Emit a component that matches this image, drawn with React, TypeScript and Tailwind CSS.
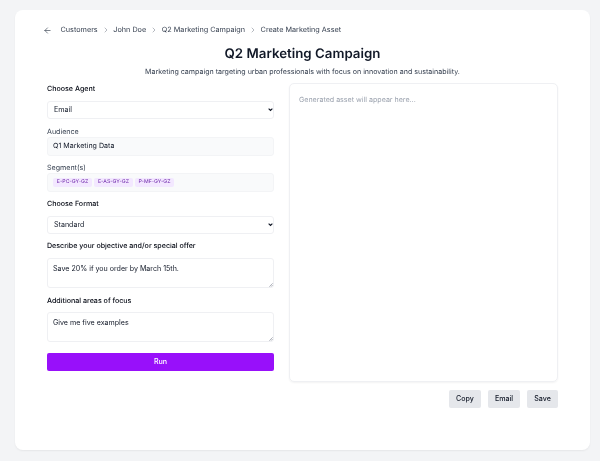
import { ArrowLeft, ChevronRight } from "lucide-react";

const font = { fontFamily: "Inter, sans-serif" };

function Crumb({ label, last }: { label: string; last?: boolean }) {
  return (
    <>
      <span className="text-[7.25px] leading-[12px] text-[#374151]">{label}</span>
      {!last && <ChevronRight className="w-[8px] h-[8px] mx-[3.8px] text-[#6b7280]" strokeWidth={1.5} />}
    </>
  );
}

function Heading({ children }: { children: string }) {
  return <div className="text-[7.1px] leading-[12px] font-medium text-[#030712]">{children}</div>;
}

function Select({ value }: { value: string }) {
  return (
    <div className="relative mt-[6px] h-[18px] w-full">
      <select
        defaultValue={value}
        className="block w-full h-full pl-[6px] pr-[12px] appearance-none text-[7.1px] leading-[12px] text-[#111827] bg-white border border-[#eff0f3] rounded-[3px] outline-none"
        style={font}
      >
        <option>{value}</option>
      </select>
      <svg viewBox="0 0 8 8" className="absolute right-[1.5px] top-[6px] w-[5px] h-[5px] pointer-events-none">
        <path d="M1 2.5 L4 5.5 L7 2.5" fill="none" stroke="#111827" strokeWidth="1.8" />
      </svg>
    </div>
  );
}

function Area({ value, mt }: { value: string; mt: string }) {
  return (
    <div className={`relative h-[30px] ${mt}`}>
      <textarea
        defaultValue={value}
        className="block w-full h-full resize-none px-[5px] py-[4px] text-[7.1px] leading-[12px] text-[#111827] bg-white border border-[#eff0f3] rounded-[3px] outline-none"
        style={font}
      />
      <svg viewBox="0 0 6 6" className="absolute right-[1px] bottom-[1px] w-[4px] h-[4px] pointer-events-none">
        <path d="M0.5 5.5 L5.5 0.5 M3 5.5 L5.5 3" fill="none" stroke="#6b7280" strokeWidth="0.8" />
      </svg>
    </div>
  );
}

function Chip({ children }: { children: string }) {
  return (
    <span className="w-[39px] h-[9px] flex items-center justify-center rounded-[2px] bg-[#f3e8ff] text-[5.2px] text-[#6b21a8]">
      {children}
    </span>
  );
}

function ActionButton({ children, width }: { children: string; width: string }) {
  return (
    <button className={`${width} h-[18px] flex items-center justify-center rounded-[2px] bg-[#e5e7eb] text-[7.1px] font-medium text-[#111827]`}>
      {children}
    </button>
  );
}

export default function App() {
  return (
    <div className="w-[600px] h-[461px] bg-[#f3f4f6] pt-[10px] pl-[15px] pr-[10px] overflow-hidden [text-rendering:geometricPrecision]" style={font}>
      <div className="w-[575px] h-[440px] bg-white rounded-[8px] px-[32px] pt-[14px] shadow-[0_1px_2px_rgba(0,0,0,0.06)] [will-change:transform]">
        <div className="flex items-center h-[12px]">
          <ArrowLeft className="w-[9px] h-[9px] mr-[8.5px] ml-[-4px] text-[#374151]" strokeWidth={1.75} />
          <Crumb label="Customers" />
          <Crumb label="John Doe" />
          <Crumb label="Q2 Marketing Campaign" />
          <Crumb label="Create Marketing Asset" last />
        </div>
        <h1 className="mt-[8px] text-center text-[13.3px] leading-[20px] font-semibold text-[#111827]">
          Q2 Marketing Campaign
        </h1>
        <p className="mt-[2px] text-center text-[7.1px] leading-[12px] text-[#374151]">
          Marketing campaign targeting urban professionals with focus on innovation and sustainability.
        </p>
        <div className="flex gap-[15px] mt-[5px]">
          <div className="w-[227px] shrink-0">
            <Heading>Choose Agent</Heading>
            <Select value="Email" />
            <div className="mt-[8px] text-[7.1px] leading-[10px] text-[#374151]">Audience</div>
            <div className="h-[19px] px-[5px] flex items-center rounded-[3px] bg-[#f9fafb] border border-[#f3f4f6] text-[7.1px] text-[#111827]">
              Q1 Marketing Data
            </div>
            <div className="mt-[7px] text-[7.1px] leading-[10px] text-[#374151]">Segment(s)</div>
            <div className="h-[19px] px-[5px] flex items-center gap-[2px] rounded-[3px] bg-[#f9fafb] border border-[#f3f4f6]">
              <Chip>E-PC-GY-GZ</Chip>
              <Chip>E-AS-GY-GZ</Chip>
              <Chip>P-MF-GY-GZ</Chip>
            </div>
            <div className="mt-[6px]">
              <Heading>Choose Format</Heading>
            </div>
            <Select value="Standard" />
            <div className="mt-[6px]">
              <Heading>Describe your objective and/or special offer</Heading>
            </div>
            <Area value="Save 20% if you order by March 15th." mt="mt-[6px]" />
            <div className="mt-[7px]">
              <Heading>Additional areas of focus</Heading>
            </div>
            <Area value="Give me five examples" mt="mt-[5px]" />
            <button className="block w-full h-[18px] mt-[11px] rounded-[2px] bg-[#9810fa] text-white text-[7.1px] font-medium">
              Run
            </button>
          </div>
          <div className="flex-1 min-w-0">
            <div className="h-[299px] border border-[#eff0f3] rounded-[5px] px-[9px] py-[10px] text-[7.1px] leading-[12px] text-[#9ca3af] shadow-[0_1px_2px_rgba(0,0,0,0.05)]">
              Generated asset will appear here...
            </div>
            <div className="flex justify-end gap-[7px] mt-[8px]">
              <ActionButton width="w-[32px]">Copy</ActionButton>
              <ActionButton width="w-[32px]">Email</ActionButton>
              <ActionButton width="w-[31px]">Save</ActionButton>
            </div>
          </div>
        </div>
      </div>
    </div>
  );
}
